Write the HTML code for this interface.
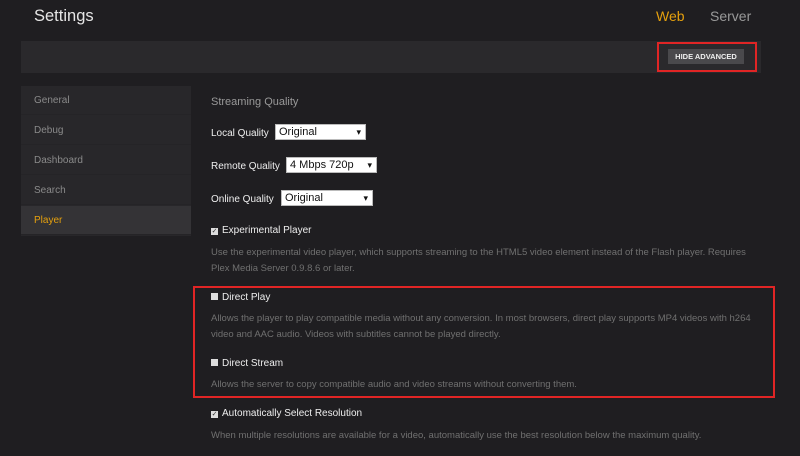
<!DOCTYPE html>
<html><head><style>
body{margin:0;width:800px;height:456px;background:#1f1e21;font-family:"Liberation Sans",sans-serif;overflow:hidden;position:relative;color:#ddd}
.a{position:absolute}
.side div{position:absolute;left:0;width:170px;height:29px;line-height:29px;padding-left:13px;box-sizing:border-box;font-size:10px;color:#8a8a8a;border-bottom:1px solid #252427}
.sel{border:1px solid #bbb;background:#fff;color:#111;font-size:11px;height:16px;line-height:15px;padding-left:3px;box-sizing:border-box}
.sel:after{content:"▾";position:absolute;right:4px;font-size:9px}
.lab{font-size:10px;color:#eee}
.d{font-size:9.5px;color:#707070;line-height:16px;white-space:nowrap}
.cb{display:inline-block;width:7px;height:7px;background:#ddd;margin-right:4px;vertical-align:0px;font-size:7px;line-height:7px;color:#333;text-align:center}
</style></head><body>
<div class="a" style="left:34px;top:7px;font-size:16.5px;color:#e6e6e6">Settings</div>
<div class="a" style="left:656px;top:8px;font-size:14px;color:#e5a00d">Web</div>
<div class="a" style="left:710px;top:8px;font-size:14px;color:#999">Server</div>
<div class="a" style="left:21px;top:41px;width:740px;height:32px;background:#2a292c"></div>
<div class="a" style="left:657px;top:42px;width:96px;height:26px;border:2px solid #e02525"></div>
<div class="a" style="left:668px;top:49px;width:76px;height:15px;background:#4a494c;color:#eee;font-size:7.5px;font-weight:bold;line-height:15px;text-align:center">HIDE ADVANCED</div>
<div class="a side" style="left:21px;top:86px;width:170px;height:150px;background:#28272a">
<div style="top:0">General</div><div style="top:30px">Debug</div><div style="top:60px">Dashboard</div><div style="top:90px">Search</div><div style="top:120px;background:#343336;color:#e5a00d">Player</div>
</div>
<div class="a" style="left:211px;top:96px;font-size:11px;color:#999">Streaming Quality</div>
<div class="a lab" style="left:211px;top:128px">Local Quality</div>
<div class="a sel" style="left:275px;top:124px;width:91px">Original</div>
<div class="a lab" style="left:211px;top:161px">Remote Quality</div>
<div class="a sel" style="left:286px;top:157px;width:91px">4 Mbps 720p</div>
<div class="a lab" style="left:211px;top:194px">Online Quality</div>
<div class="a sel" style="left:281px;top:190px;width:92px">Original</div>
<div class="a lab" style="left:211px;top:225px"><span class="cb">✓</span>Experimental Player</div>
<div class="a d" style="left:211px;top:245px">Use the experimental video player, which supports streaming to the HTML5 video element instead of the Flash player. Requires<br>Plex Media Server 0.9.8.6 or later.</div>
<div class="a" style="left:193px;top:286px;width:578px;height:108px;border:2px solid #e02525"></div>
<div class="a lab" style="left:211px;top:292px"><span class="cb"></span>Direct Play</div>
<div class="a d" style="left:211px;top:311px">Allows the player to play compatible media without any conversion. In most browsers, direct play supports MP4 videos with h264<br>video and AAC audio. Videos with subtitles cannot be played directly.</div>
<div class="a lab" style="left:211px;top:358px"><span class="cb"></span>Direct Stream</div>
<div class="a d" style="left:211px;top:377px">Allows the server to copy compatible audio and video streams without converting them.</div>
<div class="a lab" style="left:211px;top:408px"><span class="cb">✓</span>Automatically Select Resolution</div>
<div class="a d" style="left:211px;top:428px">When multiple resolutions are available for a video, automatically use the best resolution below the maximum quality.</div>
</body></html>
